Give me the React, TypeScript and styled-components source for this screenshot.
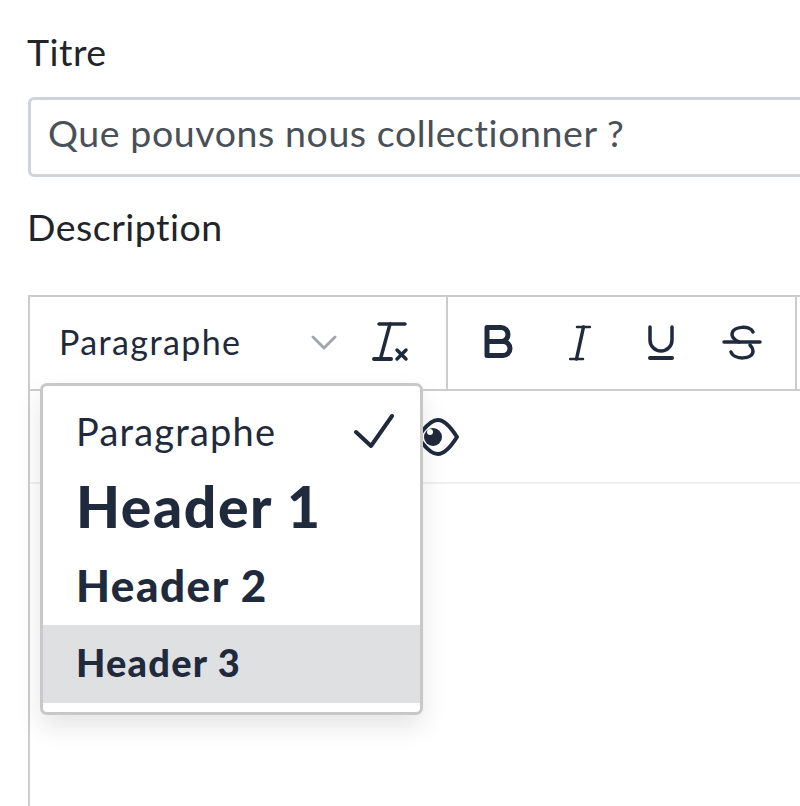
import React from "react";
import styled, { createGlobalStyle } from "styled-components";

const GlobalStyle = createGlobalStyle`
  html, body {
    margin: 0;
    padding: 0;
    background: #fff;
  }
`;

const Page = styled.div`
  width: 800px;
  height: 806px;
  overflow: hidden;
  padding: 28px 0 0 28px;
  box-sizing: border-box;
  font-family: Lato, "Open Sans", sans-serif;
  font-variant-ligatures: none;
  color: #212529;
`;

const Form = styled.div`
  width: 900px;
`;

const Label = styled.div`
  font-size: 37.5px;
  letter-spacing: 0.5px;
  line-height: 48px;
  height: 50px;
  margin-left: -1px;
`;

const Input = styled.div`
  height: 80px;
  margin: 19px 0 26px;
  box-sizing: border-box;
  border: 3px solid #ced4da;
  border-radius: 6px;
  padding: 0 17px 9px;
  display: flex;
  align-items: center;
  font-size: 37.5px;
  letter-spacing: 0.58px;
  color: #495057;
`;

const Editor = styled.div`
  position: relative;
  margin-top: 42px;
  height: 600px;
  box-sizing: border-box;
  border: solid #ccc;
  border-width: 2px 0 0 2px;
`;

const ToolRow = styled.div`
  display: flex;
  height: 94px;
  box-sizing: border-box;
  border-bottom: 2px solid #ccc;
`;

const ToolGroup = styled.div<{ $width: number }>`
  width: ${(p) => p.$width}px;
  box-sizing: border-box;
  border-right: 2px solid #ccc;
  display: flex;
  align-items: center;
`;

const SelectLabel = styled.span`
  font-size: 34px;
  letter-spacing: 1.4px;
  color: #1f2a3c;
  margin: 0 0 4px 29px;
  width: 252px;
`;

const IconButton = styled.span<{ $left: number }>`
  display: flex;
  margin-left: ${(p) => p.$left}px;
  color: #1f2a3c;
`;

const SecondRow = styled.div`
  height: 93px;
  box-sizing: border-box;
  border-bottom: 2px solid #f0f0f0;
  display: flex;
  align-items: center;
  padding-left: 390px;
  color: #1f2a3c;
`;

const Dropdown = styled.div`
  position: absolute;
  left: 10px;
  top: 86px;
  width: 383px;
  height: 332px;
  box-sizing: border-box;
  background: #fff;
  border: 3px solid #c8c8c8;
  border-radius: 7px;
  box-shadow: 0 12px 24px rgba(0, 0, 0, 0.1);
  overflow: hidden;
`;

const Options = styled.div`
  padding-top: 8px;
`;

const Option = styled.div<{
  $size: number;
  $height: number;
  $spacing: number;
  $bold?: boolean;
  $active?: boolean;
}>`
  height: ${(p) => p.$height}px;
  padding: 0 26px ${(p) => (p.$active ? 4 : 0)}px 33px;
  box-sizing: border-box;
  display: flex;
  align-items: center;
  justify-content: space-between;
  font-size: ${(p) => p.$size}px;
  letter-spacing: ${(p) => p.$spacing}px;
  font-weight: ${(p) => (p.$bold ? 900 : 400)};
  color: #1f2a3c;
  background: ${(p) => (p.$active ? "#dfe0e2" : "transparent")};
`;

const stroke = {
  fill: "none",
  stroke: "currentColor",
  strokeLinecap: "round" as const,
  strokeLinejoin: "round" as const,
};

const ClearIcon = () => (
  <svg width="40" height="42" viewBox="0 0 40 42">
    <g {...stroke} strokeWidth="3.5">
      <path d="M9 2h26" />
      <path d="M20 2l-9 33" />
      <path d="M4 37h17" strokeWidth="4" />
      <path d="M27 28l9 9M36 28l-9 9" />
    </g>
  </svg>
);

const BoldIcon = () => (
  <svg width="30" height="36" viewBox="0 0 30 36">
    <path
      {...stroke}
      strokeWidth="5"
      d="M3 2.5h14a7 7 0 0 1 0 14H3zM3 16.5h16a7 7 0 0 1 0 14H3z"
    />
  </svg>
);

const ItalicIcon = () => (
  <svg width="22" height="36" viewBox="0 0 22 36">
    <g {...stroke} strokeWidth="2.5">
      <path d="M8 2h13M1 34h13" />
      <path d="M14.5 2L7.5 34" strokeWidth="3.5" />
    </g>
  </svg>
);

const UnderlineIcon = () => (
  <svg width="26" height="36" viewBox="0 0 26 36">
    <g {...stroke} strokeWidth="3.5">
      <path d="M2 2v13a11 11 0 0 0 22 0V2" />
      <path d="M2 33h22" strokeWidth="4" />
    </g>
  </svg>
);

const StrikeIcon = () => (
  <svg width="40" height="36" viewBox="0 0 40 36">
    <g {...stroke} strokeWidth="3.5">
      <path d="M2 17h36" />
      <path d="M31 7c-3-7-20-6-21 2-.5 4 3 6 7 8M9 27c3 8 22 8 22-1 0-2-1-4-3-6" />
    </g>
  </svg>
);

const EyeIcon = () => (
  <svg width="40" height="40" viewBox="0 0 40 40">
    <path
      {...stroke}
      strokeWidth="4"
      d="M-2 20C6 8 12 3 18 3c6 0 12 6 19 17-7 11-13 17-19 17-6 0-12-5-20-17z"
    />
    <circle cx="13" cy="20" r="9" fill="currentColor" />
    <circle cx="10" cy="15" r="3" fill="#fff" />
  </svg>
);

const CaretIcon = () => (
  <svg width="26" height="16" viewBox="0 0 26 16">
    <path {...stroke} stroke="#a3a7ad" strokeWidth="3" d="M2 2l11 11L24 2" />
  </svg>
);

const CheckIcon = () => (
  <svg width="40" height="36" viewBox="0 0 40 36">
    <path {...stroke} strokeWidth="4" d="M2 19l15 14L38 3" />
  </svg>
);

const App: React.FC = () => {
  return (
    <Page>
      <GlobalStyle />
      <Form>
        <Label>Titre</Label>
        <Input>Que pouvons nous collectionner ?</Input>
        <Label>Description</Label>
        <Editor>
          <ToolRow>
            <ToolGroup $width={418}>
              <SelectLabel>Paragraphe</SelectLabel>
              <CaretIcon />
              <IconButton $left={33}>
                <ClearIcon />
              </IconButton>
            </ToolGroup>
            <ToolGroup $width={349}>
              <IconButton $left={36}>
                <BoldIcon />
              </IconButton>
              <IconButton $left={55}>
                <ItalicIcon />
              </IconButton>
              <IconButton $left={57}>
                <UnderlineIcon />
              </IconButton>
              <IconButton $left={48}>
                <StrikeIcon />
              </IconButton>
            </ToolGroup>
          </ToolRow>
          <SecondRow>
            <EyeIcon />
          </SecondRow>
          <Dropdown>
            <Options>
              <Option $size={38} $height={74} $spacing={1.2}>
                Paragraphe
                <CheckIcon />
              </Option>
              <Option $size={57} $height={76} $spacing={1.6} $bold>
                Header 1
              </Option>
              <Option $size={44} $height={81} $spacing={1.5} $bold>
                Header 2
              </Option>
              <Option $size={38} $height={78} $spacing={1.2} $bold $active>
                Header 3
              </Option>
            </Options>
          </Dropdown>
        </Editor>
      </Form>
    </Page>
  );
};

export default App;
